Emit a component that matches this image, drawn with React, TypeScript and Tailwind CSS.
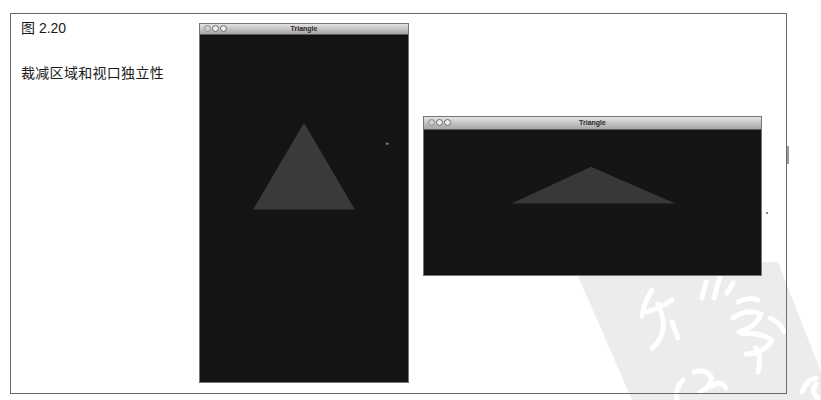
import React from "react";

function TitleBar({ title, h }: { title: string; h: string }) {
  return (
    <div
      className={`relative flex ${h} items-center border-b border-[#5a5a5a] bg-gradient-to-b from-[#e4e4e4] to-[#a6a6a6]`}
    >
      <div className="flex gap-[1px] pl-[4px]">
        <span className="h-[7px] w-[7px] rounded-full border border-[#8a8a8a] bg-[#cfcfcf]" />
        <span className="h-[7px] w-[7px] rounded-full border border-[#6a6a6a] bg-[#ededed]" />
        <span className="h-[7px] w-[7px] rounded-full border border-[#6a6a6a] bg-[#ededed]" />
      </div>
      <span className="absolute inset-x-0 text-center text-[7px] font-bold leading-none text-[#2a2a2a]">
        {title}
      </span>
    </div>
  );
}

export default function App() {
  return (
    <div
      className="relative h-[400px] w-[821px] overflow-hidden bg-white"
      style={{ fontFamily: '"Liberation Sans", "Noto Sans CJK SC", sans-serif' }}
    >
      {/* watermark, behind the figure */}
      <svg
        className="pointer-events-none absolute left-0 top-0"
        width="821"
        height="400"
        viewBox="0 0 821 400"
      >
        <polygon points="572,262 778,262 821,372 821,400 632,400" fill="#ececec" />
        <g stroke="#ffffff" strokeWidth="5" strokeLinecap="round" strokeLinejoin="round" fill="none">
          <path d="M706,282 l-4,16" />
          <path d="M720,276 l-6,22" />
          <path d="M733,283 l-6,10" />
          <path d="M652,290 q-8,12 -10,26" />
          <path d="M646,312 q14,-4 26,-12" />
          <path d="M658,304 q8,18 4,30 q-4,10 -10,14" />
          <path d="M672,322 l6,16" />
          <path d="M738,302 q12,-6 20,-2" />
          <path d="M733,318 q14,-10 28,-4 q-6,14 -22,18" />
          <path d="M742,334 q18,-2 30,6 q-8,14 -26,14" />
          <path d="M756,348 q6,10 2,24" />
          <path d="M770,318 q10,4 14,14" />
          <path d="M683,380 q-8,8 -6,20" />
          <path d="M694,372 q12,-4 18,6 q-2,10 -12,14" />
          <path d="M712,386 q8,-6 14,2" />
          <path d="M802,392 q4,-12 14,-14" />
          <path d="M816,384 q-6,8 2,14" />
        </g>
      </svg>

      <div className="relative ml-[10px] mt-[13px] flex h-[381px] w-[777px] border-[1.5px] border-[#6a6a6a]">
        <div className="w-[188px] pl-[10px] pt-[7px] text-[14px] leading-[14px] text-[#1a1a1a]">
          <div>图 2.20</div>
          <div className="mt-[31px] tracking-[0.3px]">裁减区域和视口独立性</div>
        </div>

        {/* tall window */}
        <div className="mt-[8.5px] flex h-[360px] w-[210px] flex-col border border-[#777] bg-[#141414]">
          <TitleBar title="Triangle" h="h-[11px]" />
          <svg className="flex-1" width="208" height="348" viewBox="0 0 208 348">
            <polygon points="104,88 53,175 155,175" fill="#3a3a3a" />
            <rect x="186" y="108" width="3" height="2" fill="#777" />
          </svg>
        </div>

        {/* wide window */}
        <div className="ml-[14px] mt-[101.5px] flex h-[160px] w-[339px] flex-col border border-[#777] bg-[#141414]">
          <TitleBar title="Triangle" h="h-[13px]" />
          <svg className="flex-1" width="337" height="146" viewBox="0 0 337 146">
            <polygon points="167,37 87,74 252,74" fill="#383838" />
          </svg>
        </div>
      </div>

      {/* stray marks */}
      <span className="absolute left-[766px] top-[212px] h-[2px] w-[2px] bg-[#888]" />
      <span className="absolute left-[787px] top-[146px] h-[18px] w-[2px] bg-[#999]" />
    </div>
  );
}
